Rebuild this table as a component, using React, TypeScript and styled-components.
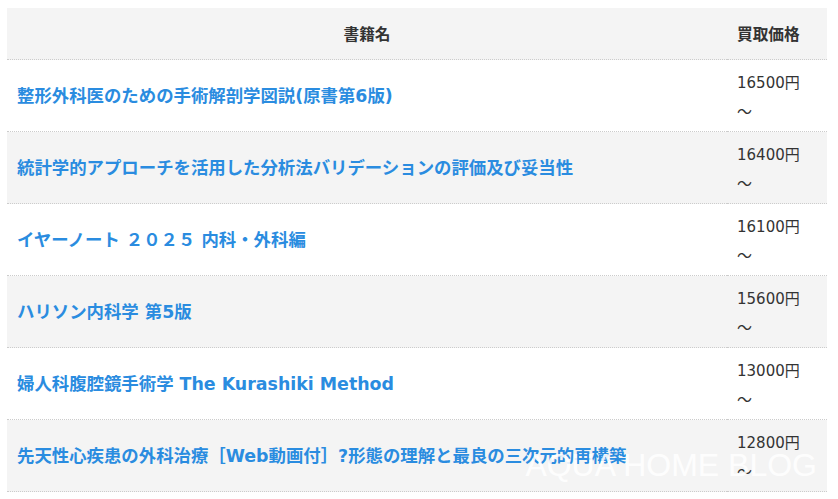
import { Fragment } from "react";
import styled, { createGlobalStyle } from "styled-components";

const GlobalStyle = createGlobalStyle`
  body {
    margin: 8px 11px 0 7px;
    background: #ffffff;
    font-family: "DejaVu Sans", "Noto Sans CJK JP", sans-serif;
  }
`;

type Book = { title: string; price: string };

const books: Book[] = [
  { title: "整形外科医のための手術解剖学図説(原書第6版)", price: "16500円" },
  { title: "統計学的アプローチを活用した分析法バリデーションの評価及び妥当性", price: "16400円" },
  { title: "イヤーノート ２０２５ 内科・外科編", price: "16100円" },
  { title: "ハリソン内科学 第5版", price: "15600円" },
  { title: "婦人科腹腔鏡手術学 The Kurashiki Method", price: "13000円" },
  { title: "先天性心疾患の外科治療［Web動画付］?形態の理解と最良の三次元的再構築", price: "12800円" },
];

// 表全体
const Wrapper = styled.div`
  position: relative;
  width: 820px;
`;

const Table = styled.div`
  display: grid;
  grid-template-columns: 720px 100px;
`;

const HeadCell = styled.div<{ align: "center" | "left" }>`
  background: #f4f4f4;
  border-bottom: 1px dotted #cccccc;
  padding: 13px 10px 12px;
  height: 26px;
  line-height: 26px;
  font-size: 15.7px;
  font-weight: 700;
  color: #333333;
  text-align: ${({ align }) => align};
  font-family: "Noto Sans CJK JP", sans-serif;
`;

const Cell = styled.div<{ shaded: boolean }>`
  background: ${({ shaded }) => (shaded ? "#f4f4f4" : "#ffffff")};
  border-bottom: 1px dotted #cccccc;
  padding: 9px 10px 10px;
  height: 52px;
  display: flex;
  align-items: center;
`;

const TitleLink = styled.a`
  color: #2a8ce0;
  font-weight: 700;
  font-size: 17.4px;
  line-height: 26px;
  text-decoration: none;
  white-space: nowrap;
  margin-top: 1px;
`;

const Price = styled.span`
  color: #333333;
  font-size: 15px;
  line-height: 27px;
  padding-top: 1px;
  align-self: flex-start;
`;

const Wave = styled.span`
  position: relative;
  top: 2px;
`;

// 透かし
const Watermark = styled.div`
  position: absolute;
  right: 10px;
  bottom: 8px;
  font-family: "Liberation Sans", Arial, sans-serif;
  font-size: 32px;
  color: rgba(255, 255, 255, 0.9);
  pointer-events: none;
`;

export default function App() {
  return (
    <>
      <GlobalStyle />
      <Wrapper>
        <Table>
          <HeadCell align="center">書籍名</HeadCell>
          <HeadCell align="left">買取価格</HeadCell>
          {books.map((b, i) => (
            <Fragment key={b.title}>
              <Cell shaded={i % 2 === 1}>
                <TitleLink href="#">{b.title}</TitleLink>
              </Cell>
              <Cell shaded={i % 2 === 1}>
                <Price>
                  {b.price}
                  <br />
                  <Wave>〜</Wave>
                </Price>
              </Cell>
            </Fragment>
          ))}
        </Table>
        <Watermark>AQUA HOME BLOG</Watermark>
      </Wrapper>
    </>
  );
}
